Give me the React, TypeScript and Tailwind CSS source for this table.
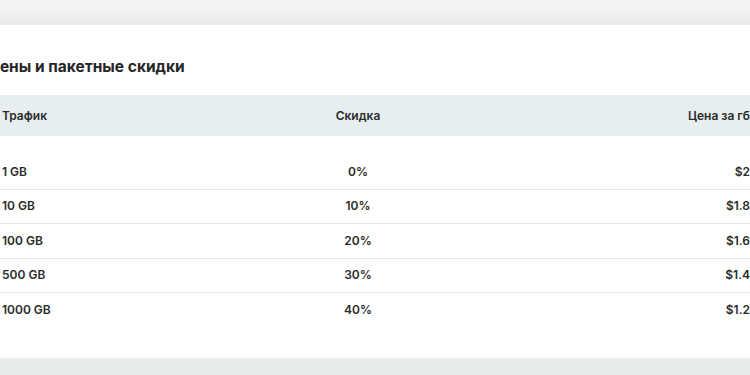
const tiers = [
  { traffic: "1 GB", discount: "0%", price: "$2" },
  { traffic: "10 GB", discount: "10%", price: "$1.8" },
  { traffic: "100 GB", discount: "20%", price: "$1.6" },
  { traffic: "500 GB", discount: "30%", price: "$1.4" },
  { traffic: "1000 GB", discount: "40%", price: "$1.2" },
];

export default function App() {
  return (
    <div
      className="w-full h-screen overflow-hidden bg-[#eaedee] flex flex-col text-[#2b2b2b]"
      style={{ fontFamily: "Inter, 'Noto Sans', sans-serif" }}
    >
      {/* top strip */}
      <div className="h-[25px] shrink-0 bg-gradient-to-b from-[#f4f4f5] via-[#f0f1f2] to-[#e8eaeb]" />

      {/* pricing card */}
      <div className="ml-[-24px] mr-[-40px] bg-white pl-[13px] pr-[27px] pt-[31px] pb-[31px] h-[333px] shrink-0">
        <h2 className="ml-[-1px] text-[15.5px] leading-[22px] font-bold text-[#262626]">
          Цены и пакетные скидки
        </h2>

        <div className="mt-[17px]">
          <div className="grid grid-cols-[300px_138px_1fr] h-[41px] items-center bg-[#e7eef0] text-[12px] font-semibold">
            <div className="pl-[13px]">Трафик</div>
            <div className="text-center">Скидка</div>
            <div className="text-right pr-[13px]">Цена за гб</div>
          </div>

          <div className="pt-[19px]">
            {tiers.map((t, i) => (
              <div
                key={t.traffic}
                className={`grid grid-cols-[300px_138px_1fr] h-[34.5px] items-center text-[12px] font-semibold ${
                  i < tiers.length - 1 ? "border-b border-[#e4e6e7]" : ""
                }`}
              >
                <div className="pl-[13px]">{t.traffic}</div>
                <div className="text-center">{t.discount}</div>
                <div className="text-right pr-[13px]">{t.price}</div>
              </div>
            ))}
          </div>
        </div>
      </div>

      <div className="flex-1 bg-[#e9eced]" />
    </div>
  );
}
